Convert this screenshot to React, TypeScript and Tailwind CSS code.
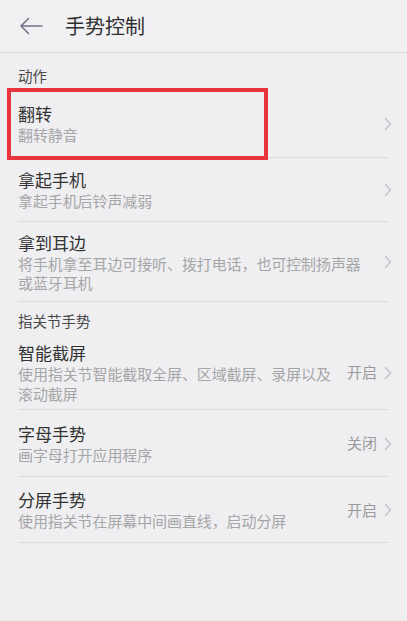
import type { ReactNode } from 'react'

type Item = {
  title: string
  desc: string[]
  value?: string
  h: string
  marked?: boolean
}

const actions: Item[] = [
  { title: '翻转', desc: ['翻转静音'], h: 'h-[68px]', marked: true },
  { title: '拿起手机', desc: ['拿起手机后铃声减弱'], h: 'h-[64px]' },
  { title: '拿到耳边', desc: ['将手机拿至耳边可接听、拨打电话，也可控制扬声器', '或蓝牙耳机'], h: 'h-[80px]' },
]

const knuckle: Item[] = [
  { title: '智能截屏', desc: ['使用指关节智能截取全屏、区域截屏、录屏以及', '滚动截屏'], value: '开启', h: 'h-[75px]' },
  { title: '字母手势', desc: ['画字母打开应用程序'], value: '关闭', h: 'h-[67px]' },
  { title: '分屏手势', desc: ['使用指关节在屏幕中间画直线，启动分屏'], value: '开启', h: 'h-[66px]' },
]

function Chevron() {
  return (
    <svg width="8" height="14" viewBox="0 0 8 14" fill="none" className="shrink-0">
      <path d="M1.5 1.5 L6.5 7 L1.5 12.5" stroke="#c4c4c8" strokeWidth="1.4" strokeLinecap="round" strokeLinejoin="round" />
    </svg>
  )
}

function Section({ children, className }: { children: ReactNode; className: string }) {
  return <div className={`px-[18px] text-[14.5px] leading-[20px] text-[#4a4a4a] ${className}`}>{children}</div>
}

function Row({ item }: { item: Item }) {
  return (
    <div className={`relative flex items-center pl-[18px] pr-[15px] ${item.h}`}>
      <div className="flex min-w-0 flex-1 flex-col">
        <div className="text-[17px] leading-[22px] text-[#333]">{item.title}</div>
        {item.desc.map((d) => (
          <div key={d} className="text-[15px] leading-[19.5px] tracking-[-0.1px] text-[#a6a6a8]">
            {d}
          </div>
        ))}
      </div>
      {item.value && <span className="mr-[7px] text-[15px] text-[#9a9a9c]">{item.value}</span>}
      <Chevron />
      <div className="absolute right-[19px] bottom-0 left-[18px] h-px bg-[#dcdcde]" />
      {item.marked && (
        <div className="absolute top-[-2px] left-[7px] h-[72px] w-[261px] border-[4px] border-[#e8343b]" />
      )}
    </div>
  )
}

export default function App() {
  return (
    <div
      className="h-[621px] w-[407px] overflow-hidden bg-[#efeff1]"
      style={{ fontFamily: '"Noto Sans CJK SC", "Noto Sans", sans-serif' }}
    >
      <header className="flex h-[53px] items-center border-b border-[#dadadc] bg-[#f1f1f3]">
        <svg width="24" height="18" viewBox="0 0 24 18" fill="none" className="ml-[19px]">
          <path d="M23 9 H2 M9.5 1.5 L2 9 L9.5 16.5" stroke="#72758a" strokeWidth="1.6" strokeLinecap="round" strokeLinejoin="round" />
        </svg>
        <h1 className="ml-[22px] text-[20px] text-[#2f2f2f]">手势控制</h1>
      </header>

      <Section className="h-[37px] pt-[13px]">动作</Section>
      {actions.map((it) => (
        <Row key={it.title} item={it} />
      ))}

      <Section className="h-[33px] pt-[9px]">指关节手势</Section>
      {knuckle.map((it) => (
        <Row key={it.title} item={it} />
      ))}
    </div>
  )
}
